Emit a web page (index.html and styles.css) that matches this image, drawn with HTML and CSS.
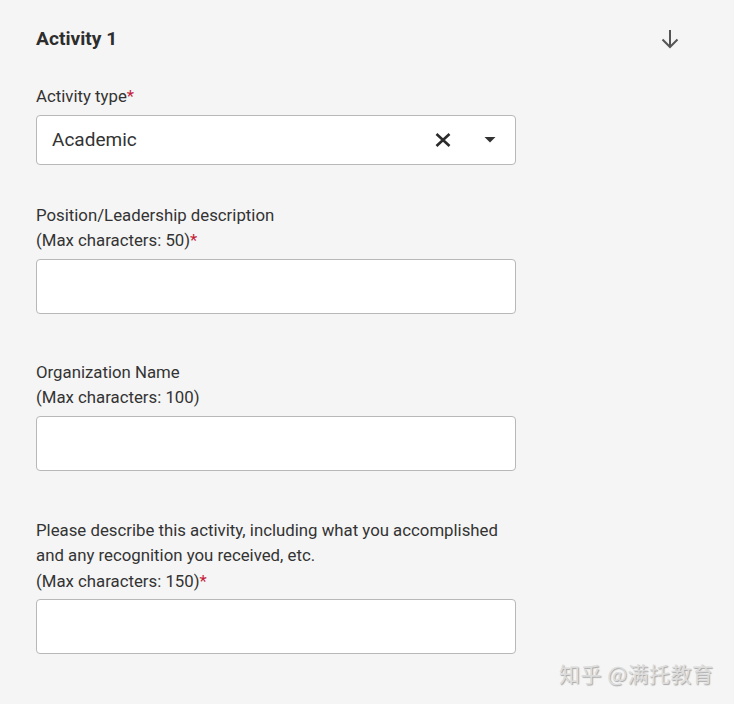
FILE: index.html
```html
<!DOCTYPE html>
<html lang="en">
<head>
<meta charset="utf-8">
<title>Activity 1</title>
<link rel="stylesheet" href="styles.css">
</head>
<body>
<div class="page">
  <div class="header">
    <h2 class="title">Activity 1</h2>
    <svg class="arrow" width="24" height="24" viewBox="0 0 24 24" aria-hidden="true">
      <path d="M12 3v17M4.5 12.5L12 20l7.5-7.5" fill="none" stroke="#555" stroke-width="2"/>
    </svg>
  </div>

  <div class="field first">
    <div class="label">Activity type<span class="req">*</span></div>
    <div class="select">
      <span class="value">Academic</span>
      <svg class="clear" width="16" height="14" viewBox="0 0 16 14" aria-hidden="true">
        <path d="M1.5 1L14.5 13M14.5 1L1.5 13" stroke="#2b2b2b" stroke-width="2.6"/>
      </svg>
      <svg class="caret" width="12" height="7" viewBox="0 0 12 7" aria-hidden="true">
        <path d="M0.5 1h11L6 6.5z" fill="#333"/>
      </svg>
    </div>
  </div>

  <div class="field second">
    <div class="label">Position/Leadership description<br>(Max characters: 50)<span class="req">*</span></div>
    <div class="input"></div>
  </div>

  <div class="field">
    <div class="label">Organization Name<br>(Max characters: 100)</div>
    <div class="input"></div>
  </div>

  <div class="field last">
    <div class="label">Please describe this activity, including what you accomplished<br>and any recognition you received, etc.<br>(Max characters: 150)<span class="req">*</span></div>
    <div class="input"></div>
  </div>

  <div class="watermark">知乎 @满托教育</div>
</div>
</body>
</html>
```

FILE: styles.css
```css
html, body {
  margin: 0;
  padding: 0;
  background: #f5f5f5;
}
body {
  font-family: Roboto, "Noto Sans", "Noto Sans CJK SC", sans-serif;
  color: #333;
}
.page {
  position: relative;
  width: 734px;
  height: 704px;
  padding: 26px 0 0 36px;
  box-sizing: border-box;
  overflow: hidden;
}
.header {
  display: flex;
  align-items: center;
  justify-content: space-between;
  width: 646px;
  height: 26px;
}
.title {
  margin: 0;
  font-size: 19.2px;
  font-weight: 700;
  color: #2d2d2d;
  line-height: 26px;
}
.arrow {
  display: block;
}
.field {
  width: 480px;
  margin-top: 46px;
}
.field.first {
  margin-top: 32px;
}
.field.second {
  margin-top: 38px;
}
.field.last {
  margin-top: 47px;
}
.label {
  font-size: 16.8px;
  line-height: 25.5px;
  color: #333;
  margin-bottom: 5px;
}
.req {
  color: #c41e3a;
}
.select {
  height: 50px;
  box-sizing: border-box;
  border: 1px solid #b8b8b8;
  border-radius: 4px;
  background: #fff;
  display: flex;
  align-items: center;
  padding: 0 19px 0 15px;
}
.value {
  flex: 1;
  font-size: 19px;
  color: #333;
}
.clear {
  margin-right: 33px;
}
.input {
  height: 55px;
  box-sizing: border-box;
  border: 1px solid #b8b8b8;
  border-radius: 4px;
  background: #fff;
}
.watermark {
  position: absolute;
  left: 559px;
  top: 658px;
  font-family: "Noto Sans CJK SC", sans-serif;
  font-size: 21px;
  color: #dcdcdc;
  text-shadow: 1px 1px 1px #a8a8a8;
  letter-spacing: 0.5px;
}
```
